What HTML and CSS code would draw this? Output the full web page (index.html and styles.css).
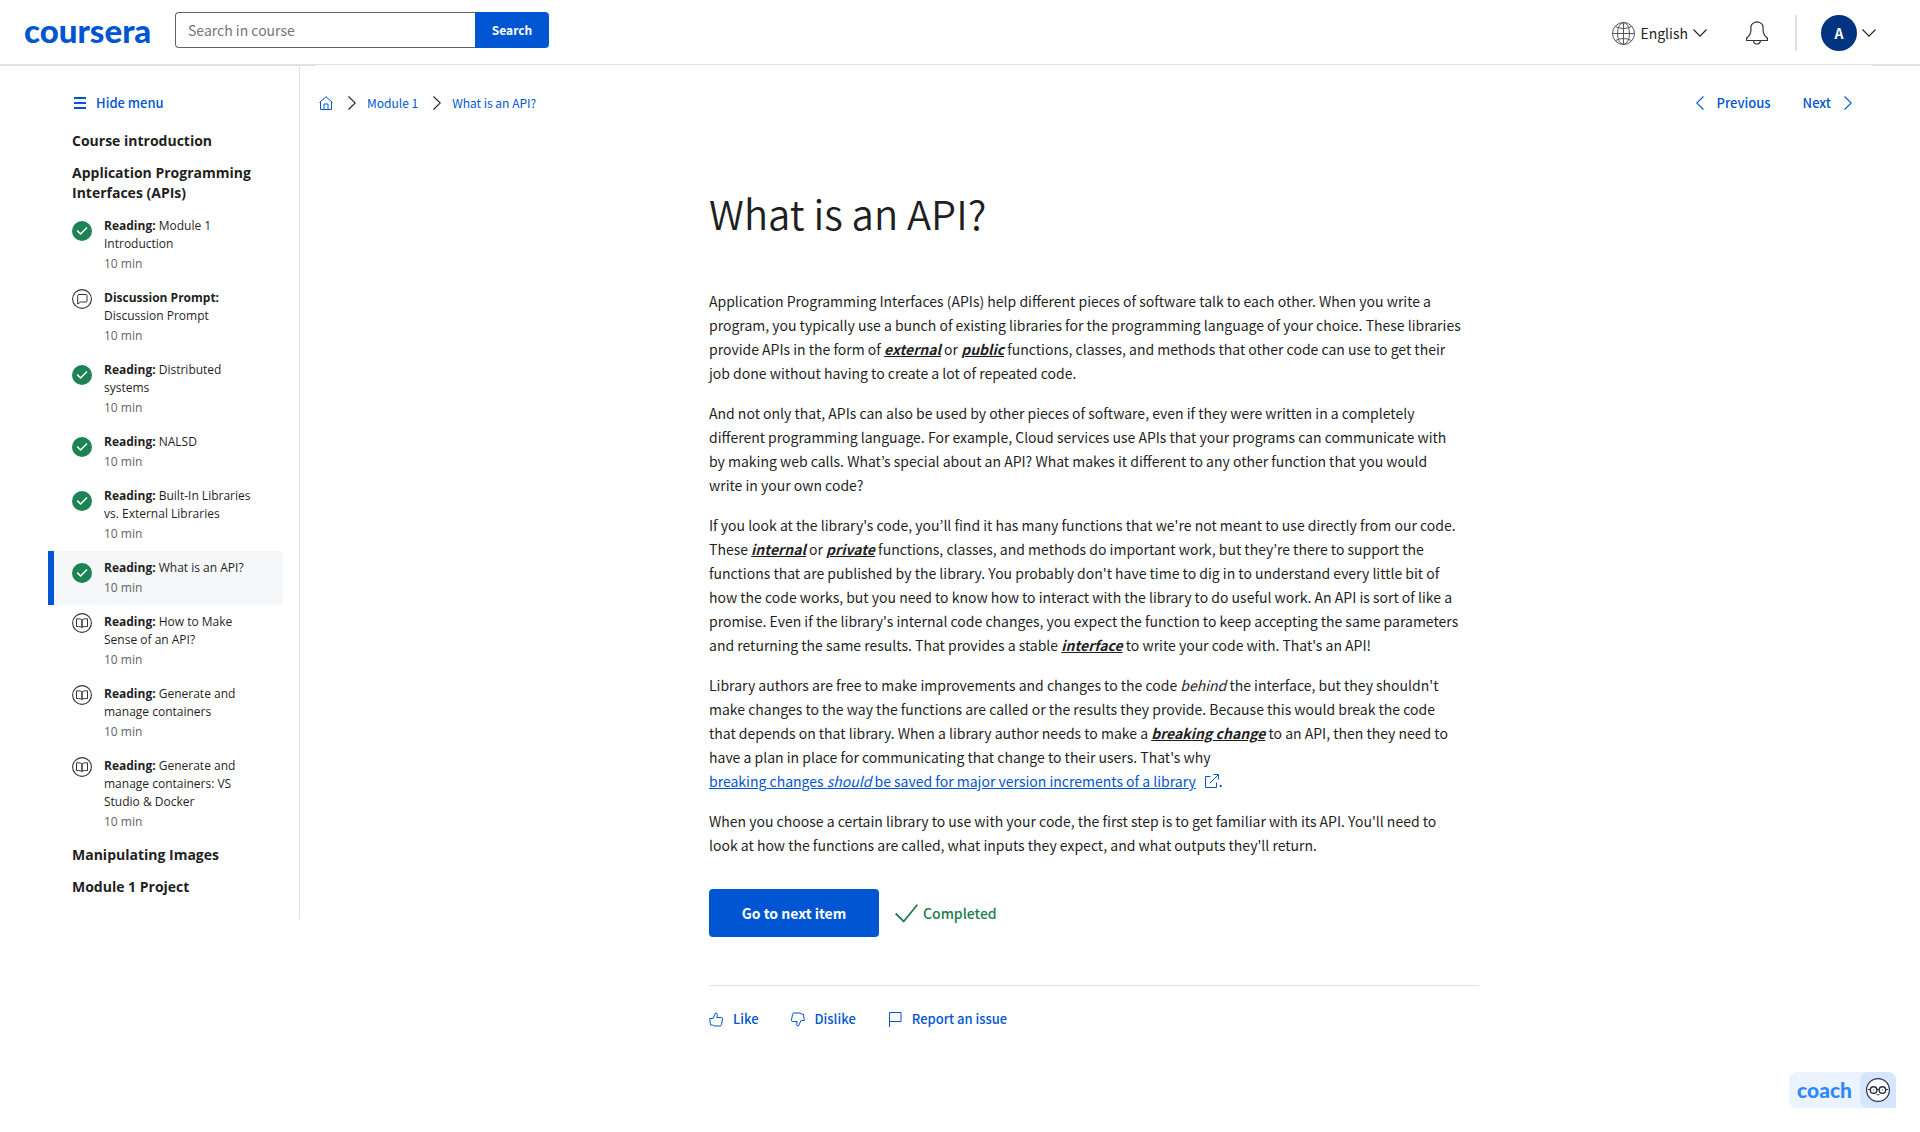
FILE: index.html
```html
<!DOCTYPE html>
<html lang="en">
<head>
<meta charset="utf-8">
<meta name="viewport" content="width=device-width, initial-scale=1">
<title>What is an API? | Coursera</title>
<link rel="stylesheet" href="styles.css">
</head>
<body>
<svg class="sprite" aria-hidden="true">
  <symbol id="i-done" viewBox="0 0 20 20"><circle cx="10" cy="10" r="10" fill="#1d8354"/><path d="M5.2 9.6l3.4 3.4 6.4-6.6" fill="none" stroke="#fff" stroke-width="1.5"/></symbol>
  <symbol id="i-book" viewBox="0 0 20 20"><g fill="none" stroke="#333"><circle cx="10" cy="10" r="9.4" stroke-width="1.1"/><path d="M10 7c-1-1-2-1.200-5.500-1.200v7.700C8 13.500 9 13.700 10 14.600c1-.9 2-1.100 5.500-1.100V5.800C12 5.800 11 6 10 7z"/><path d="M10 7v7.500" stroke-width="1.500"/></g></symbol>
  <symbol id="i-talk" viewBox="0 0 20 20"><g fill="none" stroke="#333"><circle cx="10" cy="10" r="9.400" stroke-width="1.100"/><path d="M7 5.500h7q1 0 1 1V12q0 1-1 1H8.500l-2.800 2V6.500q0-1 1.300-1z"/></g></symbol>
  <symbol id="i-right" viewBox="0 0 8 14"><path d="M.5.500L7.300 7 .5 13.500" fill="none" stroke="currentColor" stroke-width="1.100"/></symbol>
  <symbol id="i-left" viewBox="0 0 8 14"><path d="M7.500.500L.7 7l6.800 6.500" fill="none" stroke="currentColor" stroke-width="1.100"/></symbol>
  <symbol id="i-down" viewBox="0 0 14 8"><path d="M.5.500L7 7.200 13.500.500" fill="none" stroke="currentColor" stroke-width="1.100"/></symbol>
</svg>

<header class="topbar">
  <a class="logo" href="#">coursera</a>
  <form class="search">
    <input class="search-input" type="text" placeholder="Search in course" aria-label="Search in course">
    <button class="search-button" type="button">Search</button>
  </form>
  <div class="tools">
    <button class="language" type="button">
      <svg width="23" height="23" viewBox="0 0 23 23" fill="none" stroke="#555"><circle cx="11.500" cy="11.500" r="11"/><ellipse cx="11.500" cy="11.500" rx="6" ry="11"/><path d="M11.500.500v22M.5 11.500h22M3.500 4.500q8 4 16 0M3.500 18.500q8-4 16 0"/></svg>
      <span>English</span>
      <svg width="14" height="8"><use href="#i-down"/></svg>
    </button>
    <button class="bell" type="button" aria-label="Notifications">
      <svg width="22" height="24" viewBox="0 0 22 24" fill="none" stroke="#333" stroke-width="1.200"><path d="M.6 19.500V17c3-2 4.400-4 4.400-9a6 6 0 0 1 3.500-6.500q2.500-1.200 5 0A6 6 0 0 1 17 8c0 5 1.400 7 4.400 9v2.500zM7.500 19.500a3.500 3.500 0 0 0 7 0"/></svg>
    </button>
    <button class="account" type="button" aria-label="Account">
      <span class="avatar">A</span>
      <svg width="14" height="8"><use href="#i-down"/></svg>
    </button>
  </div>
</header>

<div class="page">
  <aside class="sidebar">
    <button class="hide-menu" type="button">
      <svg width="12" height="12" viewBox="0 0 12 12" fill="currentColor"><path d="M0 0h12v2H0zM0 5h12v2H0zM0 10h12v2H0z"/></svg>
      Hide menu
    </button>
    <h2 class="module">Course introduction</h2>
    <h2 class="module">Application Programming Interfaces (APIs)</h2>
    <ul class="items">
      <li><a class="item done" href="#"><svg class="state"><use href="#i-done"/></svg><div><div><b>Reading:</b> Module 1 Introduction</div><div class="time">10 min</div></div></a></li>
      <li><a class="item" href="#"><svg class="state"><use href="#i-talk"/></svg><div><div><b>Discussion Prompt:</b> Discussion Prompt</div><div class="time">10 min</div></div></a></li>
      <li><a class="item done" href="#"><svg class="state"><use href="#i-done"/></svg><div><div><b>Reading:</b> Distributed systems</div><div class="time">10 min</div></div></a></li>
      <li><a class="item done" href="#"><svg class="state"><use href="#i-done"/></svg><div><div><b>Reading:</b> NALSD</div><div class="time">10 min</div></div></a></li>
      <li><a class="item done" href="#"><svg class="state"><use href="#i-done"/></svg><div><div><b>Reading:</b> Built-In Libraries vs. External Libraries</div><div class="time">10 min</div></div></a></li>
      <li><a class="item done current" href="#" aria-current="page"><svg class="state"><use href="#i-done"/></svg><div><div><b>Reading:</b> What is an API?</div><div class="time">10 min</div></div></a></li>
      <li><a class="item" href="#"><svg class="state"><use href="#i-book"/></svg><div><div><b>Reading:</b> How to Make Sense of an API?</div><div class="time">10 min</div></div></a></li>
      <li><a class="item" href="#"><svg class="state"><use href="#i-book"/></svg><div><div><b>Reading:</b> Generate and manage containers</div><div class="time">10 min</div></div></a></li>
      <li><a class="item" href="#"><svg class="state"><use href="#i-book"/></svg><div><div><b>Reading:</b> Generate and manage containers: VS Studio &amp; Docker</div><div class="time">10 min</div></div></a></li>
    </ul>
    <h2 class="module">Manipulating Images</h2>
    <h2 class="module">Module 1 Project</h2>
  </aside>

  <main class="content">
    <div class="navrow">
      <nav class="crumbs" aria-label="Breadcrumb">
        <a href="#" aria-label="Home"><svg width="14" height="14" viewBox="0 0 14 14" fill="none" stroke="currentColor"><path d="M.5 6.500L7 .700l6.500 5.800M1.500 5.800v7.700h11V5.800M5 13.500V8h4v5.500"/></svg></a>
        <svg class="sep" width="8" height="14"><use href="#i-right"/></svg>
        <a href="#">Module 1</a>
        <svg class="sep" width="8" height="14"><use href="#i-right"/></svg>
        <a href="#">What is an API?</a>
      </nav>
      <nav class="pager" aria-label="Items">
        <a href="#"><svg width="8" height="14"><use href="#i-left"/></svg>Previous</a>
        <a href="#">Next<svg width="8" height="14"><use href="#i-right"/></svg></a>
      </nav>
    </div>

    <article class="reading">
      <h1>What is an API?</h1>
      <p>Application Programming Interfaces (APIs) help different pieces of software talk to each other. When you write a program, you typically use a bunch of existing libraries for the programming language of your choice. These libraries provide APIs in the form of <strong>external</strong> or <strong>public</strong> functions, classes, and methods that other code can use to get their<br>job done without having to create a lot of repeated code.</p>
      <p>And not only that, APIs can also be used by other pieces of software, even if they were written in a completely<br>different programming language. For example, Cloud services use APIs that your programs can communicate with<br>by making web calls. What’s special about an API? What makes it different to any other function that you would<br>write in your own code?</p>
      <p>If you look at the library's code, you’ll find it has many functions that we're not meant to use directly from our code.<br>These <strong>internal</strong> or <strong>private</strong> functions, classes, and methods do important work, but they’re there to support the<br>functions that are published by the library. You probably don't have time to dig in to understand every little bit of<br>how the code works, but you need to know how to interact with the library to do useful work. An API is sort of like a<br>promise. Even if the library's internal code changes, you expect the function to keep accepting the same parameters and returning the same results. That provides a stable <strong>interface</strong> to write your code with. That's an API!</p>
      <p>Library authors are free to make improvements and changes to the code <em>behind</em> the interface, but they shouldn't<br>make changes to the way the functions are called or the results they provide. Because this would break the code<br>that depends on that library. When a library author needs to make a <strong>breaking change</strong> to an API, then they need to<br>have a plan in place for communicating that change to their users. That's why<br><a class="external" href="#"><span>breaking changes <em>should</em> be saved for major version increments of a library</span><svg width="14" height="14" viewBox="0 0 14 14" fill="none" stroke="currentColor"><path d="M5.500 2.500h-5v11h11v-5M5 9L13 1M8.500.500h5v5"/></svg></a>.</p>
      <p>When you choose a certain library to use with your code, the first step is to get familiar with its API. You'll need to<br>look at how the functions are called, what inputs they expect, and what outputs they'll return.</p>

      <div class="finish">
        <button class="next-item" type="button">Go to next item</button>
        <span class="completed"><svg width="23" height="19" viewBox="0 0 23 19" fill="none" stroke="currentColor" stroke-width="1.800"><path d="M.7 9.500l8 8L22.300.800"/></svg>Completed</span>
      </div>

      <div class="feedback">
        <button type="button"><svg width="14" height="15" viewBox="0 0 14 15" fill="none" stroke="currentColor"><path d="M.7 6.500H4L6.500 1q1.700-.3 1.900 1.300L7.800 5.500h4.700q1.200.2 1 1.400l-1 5.800q-.3 1.300-1.500 1.300H5L3.700 13H1.500z"/></svg>Like</button>
        <button type="button"><svg width="14" height="15" viewBox="0 0 14 15" fill="none" stroke="currentColor"><path d="M13.300 8.500H10L7.500 14q-1.700.3-1.900-1.300l.6-3.200H1.500Q.3 9.300.5 8.100l1-5.800Q1.800 1 3 1h6l1.300 1h2.200z"/></svg>Dislike</button>
        <button type="button"><svg width="14" height="15" viewBox="0 0 14 15" fill="none" stroke="currentColor"><path d="M1.500 15V.500h11.500V9.500H1.500"/></svg>Report an issue</button>
      </div>
    </article>
  </main>
</div>

<button class="coach" type="button">
  <span class="coach-name">coach</span>
  <span class="coach-face"><svg width="24" height="24" viewBox="0 0 24 24" fill="none" stroke="#26324a"><circle cx="12" cy="12" r="11.400" fill="#fff" stroke-width="1.200"/><circle cx="7.600" cy="12" r="3.300" stroke-width="1.400"/><circle cx="16.400" cy="12" r="3.300" stroke-width="1.400"/><path d="M2 11.500h2.300M10.900 11.500h2.200M19.700 11.500H22M10.500 16.500q1.500 1 3 0" /><path d="M7.600 11.500v1M16.400 11.500v1"/></svg></span>
</button>
</body>
</html>
```

FILE: styles.css
```css
:root {
  --blue: #0056d2;
  --text: #1f1f1f;
  --line: #e1e1e1;
  --sans: "Source Sans Pro", "Noto Sans CJK KR", sans-serif;
}

* { box-sizing: border-box; }

body {
  margin: 0;
  min-height: 100vh;
  background: #fff;
  color: var(--text);
  font: 14px/24px var(--sans);
}

a { color: var(--blue); text-decoration: none; }
svg { display: block; flex: none; }
button { margin: 0; padding: 0; border: 0; background: none; color: inherit; font: inherit; cursor: pointer; }
.sprite { display: none; }

/* top bar */
.topbar {
  display: flex;
  align-items: center;
  height: 66px;
  padding: 0 44px 0 24px;
  border-bottom: 2px solid var(--line);
}
.logo { width: 151px; padding-bottom: 4px; color: var(--blue); font: 900 33px/40px Lato, sans-serif; }
.search { display: flex; width: 374px; height: 36px; margin-bottom: 4px; }
.search-input {
  flex: 1;
  min-width: 0;
  padding: 0 12px;
  border: 1px solid #636363;
  border-right: 0;
  border-radius: 4px 0 0 4px;
  color: var(--text);
  font: inherit;
}
.search-input::placeholder { color: #757575; }
.search-button { width: 74px; border-radius: 0 4px 4px 0; background: var(--blue); color: #fff; font-size: 12px; font-weight: 700; }
.tools { display: flex; align-items: center; margin-left: auto; padding-top: 2px; }
.language { display: flex; align-items: center; gap: 5px; }
.bell { margin-left: 39px; padding-right: 27px; }
.account { display: flex; align-items: center; gap: 5px; padding-left: 24px; border-left: 2px solid var(--line); }
.avatar { width: 36px; border-radius: 50%; background: #003380; color: #fff; font-weight: 700; line-height: 36px; text-align: center; }

/* page columns */
.page { display: flex; align-items: flex-start; }

.sidebar {
  flex: none;
  width: 300px;
  padding: 25px 16px 16px 48px;
  border-right: 1px solid var(--line);
  font-family: "Open Sans", sans-serif;
}
.hide-menu { display: flex; align-items: center; gap: 10px; height: 24px; margin: 0 0 10px 26px; color: var(--blue); font: 500 13px/24px var(--sans); }
.module { margin: 0; padding: 6px 24px; font-size: 14px; font-weight: 700; line-height: 20px; }
.items { margin: 0; padding: 0; list-style: none; }
.item {
  display: flex;
  gap: 12px;
  padding: 8px 24px 8px 18px;
  border-left: 6px solid transparent;
  color: var(--text);
  font-size: 12px;
  line-height: 18px;
}
.item b { font-weight: 700; }
.time { margin-top: 2px; color: #636363; }
.item.current { border-color: var(--blue); background: #f5f7f8; }
.state { width: 20px; height: 20px; }
.done .state { margin-top: 4px; }

.content { position: relative; flex: 1; min-width: 0; margin: -1px 48px 0 16px; background: #fff; }
.navrow { display: flex; align-items: center; justify-content: space-between; height: 76px; padding: 0 20px 0 3px; }
.crumbs { display: flex; align-items: center; font-size: 12px; }
.sep { margin: 0 11px 0 15px; }
.pager { display: flex; gap: 32px; }
.pager a { display: flex; align-items: center; gap: 13px; font-size: 13px; font-weight: 500; }

/* article */
.reading { max-width: 770px; margin: 0 auto; }
.reading h1 { margin: 46px 0 50px; font-size: 40px; font-weight: 350; line-height: 52px; }
.reading p { margin: 0 0 16px; }
.reading strong { font-style: italic; font-weight: 700; text-decoration: underline; }
.external { display: inline-flex; align-items: center; gap: 9px; }
.external > span { text-decoration: underline; }

.finish { display: flex; align-items: center; gap: 16px; margin-top: 32px; }
.next-item { width: 170px; height: 48px; border-radius: 4px; background: var(--blue); color: #fff; font-weight: 700; }
.completed { display: flex; align-items: center; gap: 5px; color: #1d7c50; font-weight: 500; }

.feedback { display: flex; gap: 32px; margin-top: 48px; padding: 21px 0 64px; border-top: 1px solid var(--line); color: var(--blue); font-size: 13px; font-weight: 500; }
.feedback button { display: flex; align-items: center; gap: 10px; }

/* floating helper */
.coach { position: fixed; right: 24px; bottom: 24px; display: flex; height: 36px; border-radius: 8px 8px 0 8px; background: #ebf3ff; }
.coach-name { padding: 0 8px; color: #2d87ff; font: 900 21px/36px Lato, sans-serif; }
.coach-face { display: grid; place-items: center; width: 36px; height: 36px; border-radius: 8px 8px 0 8px; background: #d6e6ff; }
```
